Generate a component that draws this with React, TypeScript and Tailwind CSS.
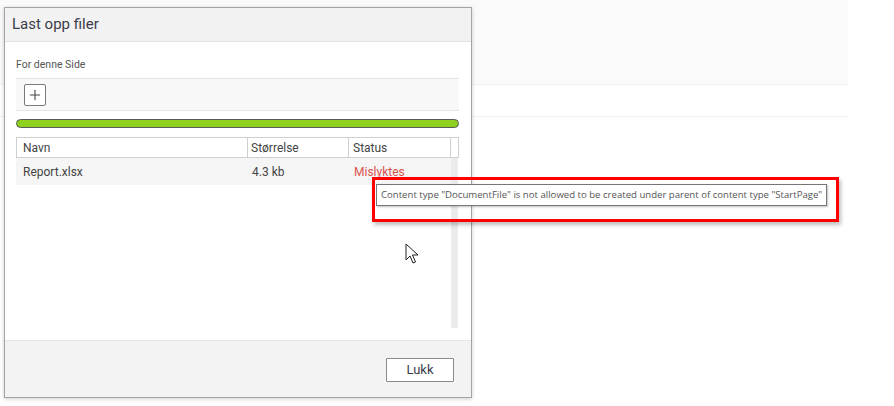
import { Plus } from "lucide-react";

const font = { fontFamily: "Roboto, 'Noto Sans', sans-serif" };

function Cursor() {
  return (
    <svg width="14" height="22" viewBox="0 0 14 22" className="absolute left-[405px] top-[243px]">
      <path
        d="M1 1 L1 17 L5 13 L8 20 L10.5 19 L7.5 12 L13 12 Z"
        fill="white"
        stroke="#222"
        strokeWidth="1"
        strokeLinejoin="miter"
      />
    </svg>
  );
}

export default function App() {
  return (
    <div className="relative w-[894px] h-[406px] bg-white overflow-hidden" style={font}>
      {/* page behind the dialog */}
      <div className="w-[848px] h-[85px] bg-[#fafafa] border-b border-[#f0f0f0]" />
      <div className="w-[848px] h-[32px] border-b border-[#f0f0f0]" />

      {/* dialog */}
      <div className="absolute left-[4px] top-[7px] w-[468px] h-[391px] flex flex-col bg-white border border-[#a4a4a4] shadow-[0_1px_4px_rgba(0,0,0,0.2)]">
        <div className="h-[34px] shrink-0 flex items-center px-[7px] bg-[#f2f2f2] border-b border-[#e2e2e2]">
          <span className="text-[15px] text-[#3b3b4a]">Last opp filer</span>
        </div>

        <div className="flex-1 flex flex-col pl-[11px] pr-[12px] min-h-0">
          <div className="mt-[16px] h-[13px] text-[10.5px] leading-[13px] text-[#555]">For denne Side</div>

          <div className="mt-[7px] h-[33px] flex items-center px-[8px] bg-[#f8f8f8] border-y border-[#e6e6e6]">
            <button className="w-[22px] h-[22px] flex items-center justify-center border border-[#7a7a7a] rounded-[2px] bg-white text-[#444]">
              <Plus size={16} strokeWidth={1.6} />
            </button>
          </div>

          <div className="mt-[8px] h-[9px] rounded-full bg-[#8fd11f] border border-[#5a5a5a]" />

          <div className="mt-[9px] flex flex-col">
            <div className="flex h-[21px] border border-[#cfcfcf] text-[12px] text-[#444]">
              <div className="w-[231px] pl-[6px] flex items-center border-r border-[#cfcfcf]">Navn</div>
              <div className="w-[101px] pl-[3px] flex items-center border-r border-[#cfcfcf]">Størrelse</div>
              <div className="w-[102px] pl-[4px] flex items-center border-r border-[#cfcfcf]">Status</div>
              <div className="flex-1" />
            </div>
            <div className="flex h-[170px]">
              <div className="flex-1 flex flex-col">
                <div className="flex h-[27px] bg-[#f5f5f5] text-[12px] text-[#444]">
                  <div className="w-[235px] pl-[7px] flex items-center">Report.xlsx</div>
                  <div className="w-[101px] pl-[1px] flex items-center">4.3 kb</div>
                  <div className="flex-1 pl-[2px] flex items-center text-[#d9534f]">Mislyktes</div>
                </div>
              </div>
              <div className="w-[7px] mr-[1px] bg-[#ebebeb]" />
            </div>
          </div>
        </div>

        <div className="h-[57px] shrink-0 flex items-start justify-end pt-[17px] pr-[17px] bg-[#f3f3f3] border-t border-[#e6e6e6]">
          <button className="w-[68px] h-[24px] bg-white border border-[#8a8a8a] rounded-[1px] text-[13px] text-[#3b3b4a]">
            Lukk
          </button>
        </div>
      </div>

      {/* tooltip with highlight */}
      <div className="absolute left-[372px] top-[177px] w-[467px] h-[45px] border-[3px] border-[#ff0000] shadow-[2px_3px_4px_rgba(0,0,0,0.25)]">
        <div
          className="absolute left-[1px] top-[4px] h-[22px] px-[4px] flex items-center bg-white border border-[#767676] shadow-[1px_1px_2px_rgba(0,0,0,0.25)] text-[9.6px] text-[#555] whitespace-nowrap"
          style={{ fontFamily: "'Open Sans', 'Noto Sans', sans-serif" }}
        >
          Content type "DocumentFile" is not allowed to be created under parent of content type "StartPage"
        </div>
      </div>

      <Cursor />
    </div>
  );
}
